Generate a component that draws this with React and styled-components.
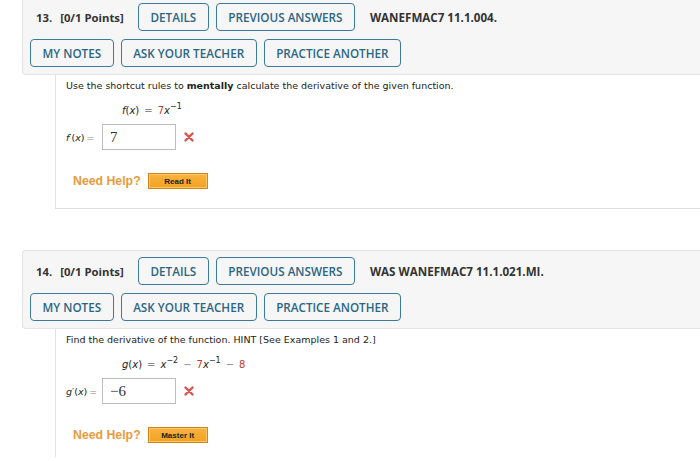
import React from 'react';
import styled, { createGlobalStyle } from 'styled-components';

const GlobalStyle = createGlobalStyle`
  html, body {
    margin: 0;
    padding: 0;
    background: #ffffff;
    overflow: hidden;
  }
`;

const Page = styled.div`
  width: 700px;
  height: 461px;
  overflow: hidden;
  display: flex;
  flex-direction: column;
  margin-top: -4px;
`;

const Question = styled.section`
  display: flex;
  flex-direction: column;
  margin-top: ${(p) => (p.$first ? '0' : '41px')};
`;

const Header = styled.div`
  margin-left: 22px;
  background: #f6f6f6;
  border: 1px solid #e4e4e4;
  border-right: none;
  border-radius: 4px 0 0 4px;
  padding: 6px 0 7px 7px;
  display: flex;
  flex-direction: column;
  gap: 8px;
`;

const HeaderRow = styled.div`
  display: flex;
  align-items: center;
  gap: 7px;
  white-space: nowrap;
`;

const Title = styled.div`
  width: 95px;
  padding-left: 6px;
  font-family: 'Open Sans', 'Liberation Sans', sans-serif;
  font-weight: 700;
  font-size: 11.3px;
  color: #333;
  display: flex;
  gap: 8px;
`;

const ActionButton = styled.button`
  height: 28px;
  box-sizing: border-box;
  padding: 0 11.5px;
  background: transparent;
  border: 1.5px solid #3b7a9b;
  border-radius: 4px;
  font-family: 'Open Sans', 'Liberation Sans', sans-serif;
  font-weight: 600;
  font-size: 11.7px;
  color: #2b6584;
  text-transform: uppercase;
  cursor: pointer;
`;

const SourceTag = styled.span`
  margin-left: 8px;
  font-family: 'Open Sans', 'Liberation Sans', sans-serif;
  font-weight: 700;
  font-size: 11.6px;
  color: #333;
`;

const Body = styled.div`
  margin-left: 55px;
  border-left: 1px solid #e2e2e2;
  border-bottom: ${(p) => (p.$closed ? '1px solid #e0e0e0' : 'none')};
  padding: 3px 0 ${(p) => (p.$closed ? '19px' : '40px')} 10px;
  display: flex;
  flex-direction: column;
  font-family: 'DejaVu Sans', Verdana, sans-serif;
  font-size: 9.5px;
  color: #222;
`;

const Prompt = styled.div`
  line-height: 16px;
  b {
    font-weight: 700;
  }
`;

const Formula = styled.div`
  margin: 9px 0 0 56px;
  line-height: 16px;
  font-size: 10px;
  color: #222;
  i {
    font-style: italic;
  }
  sup {
    font-size: 8px;
    vertical-align: 5px;
    line-height: 0;
  }
`;

const Red = styled.span`
  color: #c0392b;
`;

const Eq = styled.span`
  color: #888;
  margin: 0 5px;
`;

const AnswerRow = styled.div`
  margin-top: 5px;
  display: flex;
  align-items: center;
`;

const Label = styled.span`
  width: 36px;
  white-space: nowrap;
  font-size: 9.5px;
  i {
    font-style: italic;
  }
  em {
    font-style: normal;
    color: #888;
    margin-left: 2px;
  }
`;

const AnswerBox = styled.div`
  width: 74px;
  height: 26px;
  box-sizing: border-box;
  border: 1px solid #bdbdbd;
  background: #fff;
  padding: 0 7px;
  display: flex;
  align-items: center;
  font-family: 'Liberation Serif', 'Times New Roman', serif;
  font-size: 15px;
  color: #333;
`;

const WrongMark = styled.svg`
  margin-left: 8px;
  width: 10px;
  height: 10px;
`;

const HelpRow = styled.div`
  margin: 23px 0 0 7px;
  display: flex;
  align-items: center;
  gap: 7px;
  height: 16px;
`;

const HelpText = styled.span`
  font-family: 'Liberation Sans', Arial, sans-serif;
  font-weight: 700;
  font-size: 12.3px;
  color: #e89b3c;
`;

const HelpButton = styled.button`
  width: 60px;
  height: 16px;
  box-sizing: border-box;
  padding: 0;
  background: linear-gradient(#f8b340, #f3a21f);
  border: 1px solid #d0851c;
  box-shadow: inset 0 0 0 1px #fbc768;
  font-family: 'Liberation Sans', Arial, sans-serif;
  font-weight: 700;
  font-size: 8px;
  color: #222;
  cursor: pointer;
`;

const Cross = () => (
  <WrongMark viewBox="0 0 10 10">
    <path d="M1.5 1.5 L8.5 8.5 M8.5 1.5 L1.5 8.5" stroke="#d9534f" strokeWidth="2.4" strokeLinecap="round" />
  </WrongMark>
);

const QuestionHeader = ({ number, source }) => (
  <Header>
    <HeaderRow>
      <Title>
        <span>{number}.</span>
        <span>[0/1 Points]</span>
      </Title>
      <ActionButton>Details</ActionButton>
      <ActionButton>Previous Answers</ActionButton>
      <SourceTag>{source}</SourceTag>
    </HeaderRow>
    <HeaderRow>
      <ActionButton>My Notes</ActionButton>
      <ActionButton>Ask Your Teacher</ActionButton>
      <ActionButton>Practice Another</ActionButton>
    </HeaderRow>
  </Header>
);

const App = () => {
  return (
    <>
      <GlobalStyle />
      <Page>
        <Question $first>
          <QuestionHeader number="13" source="WANEFMAC7 11.1.004." />
          <Body $closed>
            <Prompt>
              Use the shortcut rules to <b>mentally</b> calculate the derivative of the given function.
            </Prompt>
            <Formula>
              <i>f</i>(<i>x</i>)<Eq>=</Eq><Red>7</Red><i>x</i>
              <sup>−1</sup>
            </Formula>
            <AnswerRow>
              <Label>
                <i>f</i>′(<i>x</i>)<em>=</em>
              </Label>
              <AnswerBox>7</AnswerBox>
              <Cross />
            </AnswerRow>
            <HelpRow>
              <HelpText>Need Help?</HelpText>
              <HelpButton>Read It</HelpButton>
            </HelpRow>
          </Body>
        </Question>

        <Question>
          <QuestionHeader number="14" source="WAS WANEFMAC7 11.1.021.MI." />
          <Body>
            <Prompt>Find the derivative of the function. HINT [See Examples 1 and 2.]</Prompt>
            <Formula>
              <i>g</i>(<i>x</i>)<Eq>=</Eq><i>x</i>
              <sup>−2</sup>
              <Eq>−</Eq>
              <Red>7</Red>
              <i>x</i>
              <sup>−1</sup>
              <Eq>−</Eq>
              <Red>8</Red>
            </Formula>
            <AnswerRow>
              <Label>
                <i>g</i>′(<i>x</i>)<em>=</em>
              </Label>
              <AnswerBox>−6</AnswerBox>
              <Cross />
            </AnswerRow>
            <HelpRow>
              <HelpText>Need Help?</HelpText>
              <HelpButton>Master It</HelpButton>
            </HelpRow>
          </Body>
        </Question>
      </Page>
    </>
  );
};

export default App;
